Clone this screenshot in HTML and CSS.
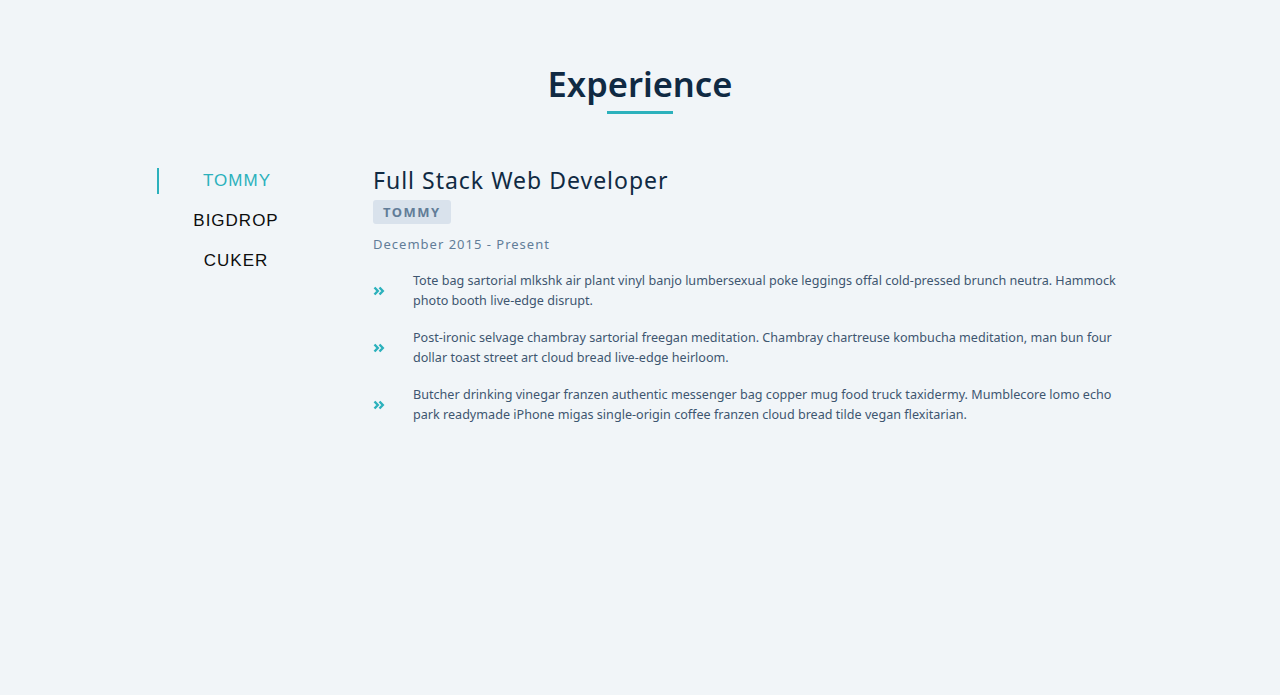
FILE: index.html
```html
<!DOCTYPE html>
<html lang="en">
<head>
<meta charset="utf-8">
<title>Experience</title>
<link rel="stylesheet" href="styles.css">
</head>
<body>
<section class="experience">
  <h2 class="section-title">Experience</h2>
  <div class="exp-body">
    <ul class="tabs">
      <li class="tab active">TOMMY</li>
      <li class="tab">BIGDROP</li>
      <li class="tab">CUKER</li>
    </ul>
    <div class="job">
      <h3 class="job-title">Full Stack Web Developer</h3>
      <span class="company">TOMMY</span>
      <p class="dates">December 2015 - Present</p>
      <ul class="duties">
        <li class="duty">
          <span class="chev"><svg width="12" height="10" viewBox="0 0 12 10"><path d="M1.5 1.5 L4.8 5 L1.5 8.5 M6.5 1.5 L9.8 5 L6.5 8.5" fill="none" stroke="#2cb1bc" stroke-width="2.4"/></svg></span>
          <p>Tote bag sartorial mlkshk air plant vinyl banjo lumbersexual poke leggings offal cold-pressed brunch neutra. Hammock photo booth live-edge disrupt.</p>
        </li>
        <li class="duty">
          <span class="chev"><svg width="12" height="10" viewBox="0 0 12 10"><path d="M1.5 1.5 L4.8 5 L1.5 8.5 M6.5 1.5 L9.8 5 L6.5 8.5" fill="none" stroke="#2cb1bc" stroke-width="2.4"/></svg></span>
          <p>Post-ironic selvage chambray sartorial freegan meditation. Chambray chartreuse kombucha meditation, man bun four dollar toast street art cloud bread live-edge heirloom.</p>
        </li>
        <li class="duty">
          <span class="chev"><svg width="12" height="10" viewBox="0 0 12 10"><path d="M1.5 1.5 L4.8 5 L1.5 8.5 M6.5 1.5 L9.8 5 L6.5 8.5" fill="none" stroke="#2cb1bc" stroke-width="2.4"/></svg></span>
          <p>Butcher drinking vinegar franzen authentic messenger bag copper mug food truck taxidermy. Mumblecore lomo echo park readymade iPhone migas single-origin coffee franzen cloud bread tilde vegan flexitarian.</p>
        </li>
      </ul>
    </div>
  </div>
</section>
</body>
</html>
```
FILE: styles.css
```css
* { box-sizing: border-box; }
html, body { margin: 0; padding: 0; }
body {
  background: #f1f5f8;
  font-family: "Noto Sans", "Open Sans", sans-serif;
  color: #102a43;
  min-height: 695px;
}
.experience {
  padding-top: 60px;
}
.section-title {
  margin: 0 auto;
  text-align: center;
  font-size: 34.5px;
  font-weight: 600;
  letter-spacing: 0;
  line-height: 48px;
  color: #102a43;
  display: flex;
  flex-direction: column;
  align-items: center;
}
.section-title::after {
  content: "";
  display: block;
  width: 66px;
  height: 3px;
  background: #2cb1bc;
  margin-top: 3px;
}
.exp-body {
  width: 966px;
  margin: 52px auto 0 157px;
  display: flex;
}
.tabs {
  list-style: none;
  margin: 2px 0 0;
  padding: 0;
  width: 158px;
  flex-shrink: 0;
}
.tab {
  font-family: "Liberation Sans", Arial, sans-serif;
  font-size: 17px;
  letter-spacing: 1px;
  color: #0d0d0d;
  text-align: center;
  height: 26px;
  line-height: 26px;
  margin-bottom: 14px;
}
.tab.active {
  color: #2cb1bc;
  border-left: 2px solid #2cb1bc;
}
.job {
  margin-left: 58px;
  flex: 1;
}
.job-title {
  margin: 0;
  font-size: 23px;
  font-weight: 400;
  letter-spacing: 1px;
  line-height: 28px;
  color: #102a43;
}
.company {
  display: inline-block;
  margin-top: 6px;
  background: #d9e2ec;
  color: #627d98;
  font-weight: 700;
  font-size: 13px;
  letter-spacing: 1.5px;
  padding: 0 10px;
  height: 24px;
  line-height: 24px;
  border-radius: 3px;
}
.dates {
  margin: 10px 0 0;
  font-size: 13px;
  letter-spacing: 1px;
  color: #627d98;
  line-height: 20px;
}
.duties {
  list-style: none;
  margin: 17px 0 0;
  padding: 0;
}
.duty {
  display: flex;
  align-items: center;
  margin-bottom: 17px;
}
.chev {
  width: 40px;
  flex-shrink: 0;
  display: flex;
  align-items: center;
}
.duty p {
  margin: 0;
  font-size: 12.6px;
  line-height: 20px;
  color: #3e5670;
}
```
